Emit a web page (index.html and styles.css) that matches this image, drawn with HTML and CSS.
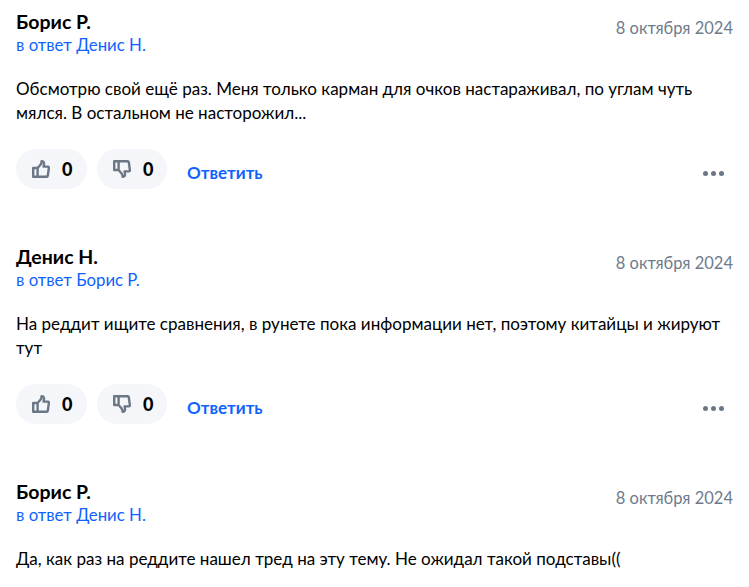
FILE: index.html
```html
<!DOCTYPE html>
<html lang="ru">
<head>
  <meta charset="UTF-8">
  <title>Комментарии</title>
  <link rel="stylesheet" href="styles.css">
</head>
<body>
<svg class="defs" width="0" height="0">
  <symbol id="thumb" viewBox="0 0 18 18">
    <path d="M5.6 8 L8.4 4.8 C9.4 3.6 9.6 2.6 9.6 1.2 C11.4 1.2 12.2 2.4 12 4 L11.6 6.6 L16 6.6 C16.6 6.6 17 7.1 16.9 7.7 L15.8 15.8 C15.7 16.4 15.3 16.8 14.7 16.8 L5.6 16.8 Z M1.2 8 L5.6 8 L5.6 16.8 L1.2 16.8 Z" fill="none" stroke="currentColor" stroke-width="2.4" stroke-linejoin="round"/>
  </symbol>
</svg>
<div class="comment">
  <div class="head">
    <div>
      <div class="name">Борис Р.</div>
      <a class="reply-to">в ответ Денис Н.</a>
    </div>
    <div class="date">8 октября 2024</div>
  </div>
  <p class="text">Обсмотрю свой ещё раз. Меня только карман для очков настараживал, по углам чуть мялся. В остальном не насторожил...</p>
  <div class="actions">
    <button class="vote"><svg class="icon"><use href="#thumb"/></svg>0</button>
    <button class="vote"><svg class="icon down"><use href="#thumb"/></svg>0</button>
    <a class="answer">Ответить</a>
    <div class="more"><i></i><i></i><i></i></div>
  </div>
</div>
<div class="comment">
  <div class="head">
    <div>
      <div class="name">Денис Н.</div>
      <a class="reply-to">в ответ Борис Р.</a>
    </div>
    <div class="date">8 октября 2024</div>
  </div>
  <p class="text">На реддит ищите сравнения, в рунете пока информации нет, поэтому китайцы и жируют тут</p>
  <div class="actions">
    <button class="vote"><svg class="icon"><use href="#thumb"/></svg>0</button>
    <button class="vote"><svg class="icon down"><use href="#thumb"/></svg>0</button>
    <a class="answer">Ответить</a>
    <div class="more"><i></i><i></i><i></i></div>
  </div>
</div>
<div class="comment">
  <div class="head">
    <div>
      <div class="name">Борис Р.</div>
      <a class="reply-to">в ответ Денис Н.</a>
    </div>
    <div class="date">8 октября 2024</div>
  </div>
  <p class="text">Да, как раз на реддите нашел тред на эту тему. Не ожидал такой подставы((</p>
</div>
</body>
</html>
```
FILE: styles.css
```css
html, body { height: 100%; overflow: hidden; }
body { margin: 0; padding: 11px 16px 0; box-sizing: border-box; background: #fff; color: #000; font-family: "Lato", "Noto Sans", sans-serif; font-size: 17.05px; }
.defs { position: absolute; }
.comment { margin-bottom: 57px; }
.comment:last-child { margin-bottom: 0; }
.head { display: flex; justify-content: space-between; }
.name { font-size: 19.5px; font-weight: 700; line-height: 22px; }
.reply-to { display: block; color: #0f62fe; font-size: 16.8px; line-height: 24px; }
.date { color: #6f7b8b; font-size: 16.5px; line-height: 24px; margin-top: 5px; }
.text { margin: 20px 0 0; line-height: 24px; }
.actions { display: flex; align-items: center; margin-top: 24px; }
.vote { display: flex; align-items: center; gap: 12px; height: 40px; width: 71px; margin-right: 10px; padding: 0 0 0 16px; border: none; border-radius: 20px; background: #f4f6fa; color: #000; font: 900 18px "Lato", "Noto Sans", sans-serif; }
.vote + .vote { width: 70px; }
.icon { width: 18px; height: 18px; color: #6b7785; }
.icon.down { transform: rotate(180deg) scaleX(-1); }
.answer { margin-left: 10px; margin-top: 6px; color: #0f62fe; font-size: 17px; font-weight: 700; }
.more { display: flex; gap: 3px; margin-left: auto; margin-right: 9px; margin-top: 8px; }
.more i { width: 5px; height: 5px; border-radius: 50%; background: #6b7785; }
```
